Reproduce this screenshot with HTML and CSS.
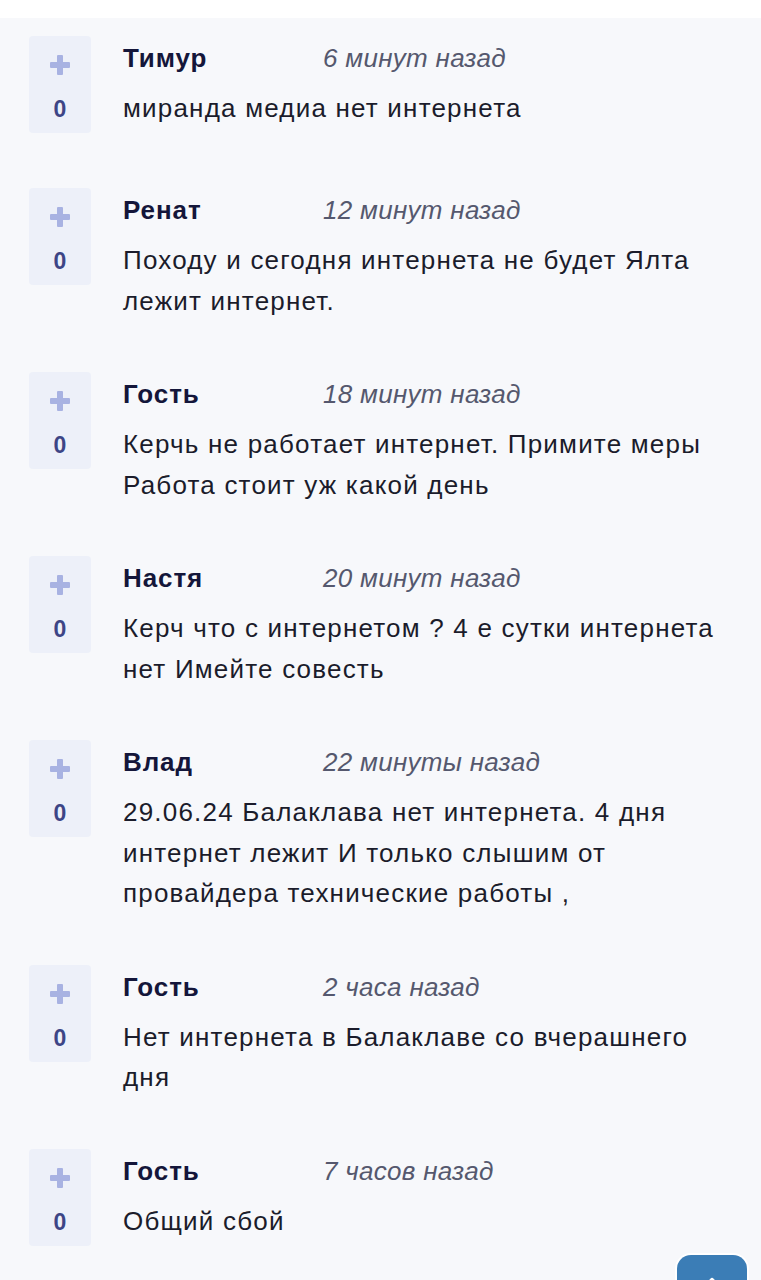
FILE: index.html
```html
<!DOCTYPE html>
<html lang="ru">
<head>
<meta charset="utf-8">
<title>Комментарии</title>
<link rel="stylesheet" href="styles.css">
</head>
<body>
<div class="top-strip"></div>
<main class="panel">
  <ul class="comments">
    <li class="comment">
      <div class="vote"><span class="plus"></span><span class="count">0</span></div>
      <div class="body">
        <div class="meta"><span class="name">Тимур</span><span class="time">6 минут назад</span></div>
        <p class="text">миранда медиа нет интернета</p>
      </div>
    </li>
    <li class="comment">
      <div class="vote"><span class="plus"></span><span class="count">0</span></div>
      <div class="body">
        <div class="meta"><span class="name">Ренат</span><span class="time">12 минут назад</span></div>
        <p class="text">Походу и сегодня интернета не будет Ялта лежит интернет.</p>
      </div>
    </li>
    <li class="comment">
      <div class="vote"><span class="plus"></span><span class="count">0</span></div>
      <div class="body">
        <div class="meta"><span class="name">Гость</span><span class="time">18 минут назад</span></div>
        <p class="text">Керчь не работает интернет. Примите меры Работа стоит уж какой день</p>
      </div>
    </li>
    <li class="comment">
      <div class="vote"><span class="plus"></span><span class="count">0</span></div>
      <div class="body">
        <div class="meta"><span class="name">Настя</span><span class="time">20 минут назад</span></div>
        <p class="text">Керч что с интернетом ? 4 е сутки интернета нет Имейте совесть</p>
      </div>
    </li>
    <li class="comment">
      <div class="vote"><span class="plus"></span><span class="count">0</span></div>
      <div class="body">
        <div class="meta"><span class="name">Влад</span><span class="time">22 минуты назад</span></div>
        <p class="text">29.06.24 Балаклава нет интернета. 4 дня интернет лежит И только слышим от провайдера технические работы ,</p>
      </div>
    </li>
    <li class="comment">
      <div class="vote"><span class="plus"></span><span class="count">0</span></div>
      <div class="body">
        <div class="meta"><span class="name">Гость</span><span class="time">2 часа назад</span></div>
        <p class="text">Нет интернета в Балаклаве со вчерашнего дня</p>
      </div>
    </li>
    <li class="comment">
      <div class="vote"><span class="plus"></span><span class="count">0</span></div>
      <div class="body">
        <div class="meta"><span class="name">Гость</span><span class="time">7 часов назад</span></div>
        <p class="text">Общий сбой</p>
      </div>
    </li>
  </ul>
</main>
<button class="to-top" aria-label="Наверх">
  <svg width="22" height="22" viewBox="0 0 22 22"><path d="M11 19V4M4 10l7-7 7 7" fill="none" stroke="#fff" stroke-width="2.5" stroke-linecap="round" stroke-linejoin="round"/></svg>
</button>
</body>
</html>
```
FILE: styles.css
```css
html, body {
  margin: 0;
  padding: 0;
  background: #f7f8fb;
  font-family: "Liberation Sans", Arial, sans-serif;
}
.top-strip {
  height: 18px;
  background: #ffffff;
}
.panel {
  background: #f7f8fb;
  padding-top: 18px;
  min-height: 1300px;
}
.comments {
  list-style: none;
  margin: 0;
  padding: 0 30px 0 29px;
}
.comment {
  display: flex;
  align-items: flex-start;
  gap: 32px;
  min-height: 101px;
  margin-bottom: 51px;
}
.vote {
  flex: none;
  width: 62px;
  height: 97px;
  background: #edf0f9;
  border-radius: 4px;
  display: flex;
  flex-direction: column;
  align-items: center;
}
.plus {
  position: relative;
  width: 20px;
  height: 20px;
  margin-top: 19px;
}
.plus::before, .plus::after {
  content: "";
  position: absolute;
  background: #a8b2e2;
  border-radius: 1px;
}
.plus::before {
  left: 7px; top: 0; width: 6px; height: 20px;
}
.plus::after {
  top: 7px; left: 0; height: 6px; width: 20px;
}
.count {
  margin-top: 19px;
  font-size: 23px;
  font-weight: 700;
  color: #3d4586;
  line-height: 30px;
}
.body {
  flex: 1;
  min-width: 0;
}
.meta {
  display: flex;
  height: 44px;
  line-height: 44px;
}
.name {
  width: 200px;
  font-size: 26px;
  font-weight: 700;
  color: #14163a;
  letter-spacing: 0.9px;
}
.time {
  font-size: 26px;
  font-style: italic;
  color: #55586e;
  letter-spacing: 0.3px;
}
.text {
  margin: 8px 0 0;
  font-size: 26px;
  line-height: 40.5px;
  color: #1b1c2b;
  letter-spacing: 1.2px;
}
.to-top {
  position: fixed;
  left: 677px;
  top: 1255px;
  width: 70px;
  height: 60px;
  border: none;
  border-radius: 14px;
  background: #3b7db6;
  box-shadow: 0 0 0 2px #ffffff;
  padding: 0;
  display: flex;
  justify-content: center;
  align-items: flex-start;
}
.to-top svg {
  margin-top: 21px;
}
```
